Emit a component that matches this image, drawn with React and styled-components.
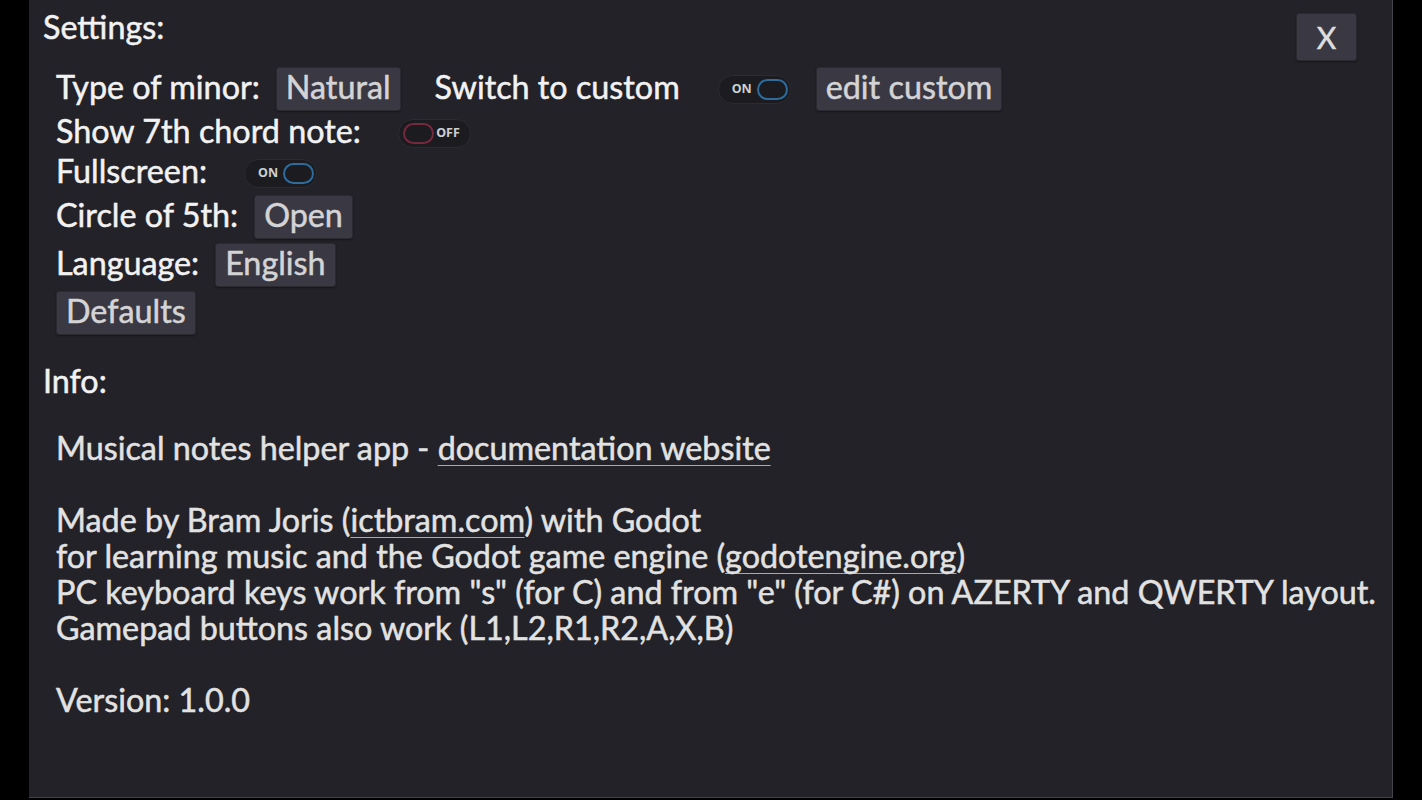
import React from 'react';
import styled, { createGlobalStyle } from 'styled-components';

const GlobalStyle = createGlobalStyle`
  html, body {
    margin: 0;
    padding: 0;
    background: #000000;
    overflow: hidden;
  }
  body {
    font-family: Lato, "Noto Sans", sans-serif;
  }
`;

const Screen = styled.div`
  width: 1422px;
  height: 800px;
  display: flex;
  background: #000000;
`;

const Panel = styled.div`
  margin-left: 29px;
  width: 1364px;
  height: 798px;
  background: #232228;
  border-right: 1px solid #44434b;
  border-bottom: 1px solid #44434b;
  padding: 9px 35px 0 14px;
  box-sizing: border-box;
  display: flex;
  flex-direction: column;
  color: #f0f0f0;
  font-size: 32.3px;
  line-height: 36px;
  -webkit-text-stroke: 0.5px currentColor;
`;

const Header = styled.div`
  display: flex;
  justify-content: space-between;
  align-items: flex-start;
`;

const Title = styled.div`
  color: #f2f2f2;
  margin-top: ${(p) => p.$top || 0}px;
`;

const CloseButton = styled.button`
  margin-top: 4px;
  width: 61px;
  height: 48px;
  font-family: inherit;
  font-size: 30px;
  color: #dedede;
  background: #3a3943;
  border: 1px solid #2b2a31;
  border-radius: 3px;
  box-shadow: 0 1px 2px rgba(0, 0, 0, 0.4);
  padding: 0;
  -webkit-text-stroke: 0.5px currentColor;
`;

const Rows = styled.div`
  display: flex;
  flex-direction: column;
  gap: 4px;
  padding-left: 13px;
  margin-top: 6px;
`;

const Row = styled.div`
  display: flex;
  align-items: center;
  min-height: ${(p) => p.$h || 36}px;
`;

const Label = styled.span`
  color: #f2f2f2;
  margin-right: ${(p) => p.$gap || 0}px;
  white-space: nowrap;
  position: relative;
  top: -2px;
`;

const Button = styled.button`
  height: 44px;
  padding: 0 9px 4px;
  font-family: inherit;
  font-size: 32.3px;
  line-height: 36px;
  color: #d4d4d6;
  background: #3a3943;
  border: 1px solid #2b2a31;
  border-radius: 3px;
  box-shadow: 0 1px 2px rgba(0, 0, 0, 0.4);
  margin-right: ${(p) => p.$gap || 0}px;
  white-space: nowrap;
  -webkit-text-stroke: 0.5px currentColor;
`;

const Track = styled.div`
  width: 73px;
  height: 29px;
  box-sizing: border-box;
  border-radius: 15px;
  background: #1c1b20;
  border: 1px solid #2c2b31;
  display: flex;
  align-items: center;
  flex-direction: ${(p) => (p.$on ? 'row' : 'row-reverse')};
  justify-content: space-between;
  padding-left: ${(p) => (p.$on ? 13 : 4)}px;
  padding-right: ${(p) => (p.$on ? 2 : 10)}px;
  margin-right: ${(p) => p.$gap || 0}px;
  -webkit-text-stroke: 0;
`;

const ToggleText = styled.span`
  font-family: "Noto Sans", sans-serif;
  font-size: 12.5px;
  line-height: 12px;
  font-weight: 700;
  color: #cfcfcf;
`;

const Knob = styled.span`
  width: 31px;
  height: 21px;
  box-sizing: border-box;
  border-radius: 11px;
  border: 2px solid ${(p) => (p.$on ? '#2f6c9c' : '#74293e')};
`;

const Toggle = ({ on, gap }) => (
  <Track $on={on} $gap={gap}>
    <ToggleText>{on ? 'ON' : 'OFF'}</ToggleText>
    <Knob $on={on} />
  </Track>
);

const Info = styled.div`
  padding-left: 13px;
  margin-top: 31px;
  color: #e2e2e2;
`;

const Line = styled.div`
  min-height: 36px;
  white-space: nowrap;
`;

const Link = styled.span`
  text-decoration: underline;
  text-decoration-color: #a9a9ad;
  text-decoration-thickness: 1px;
  text-underline-offset: 5px;
`;

export default function App() {
  return (
    <Screen>
      <GlobalStyle />
      <Panel>
        <Header>
          <Title>Settings:</Title>
          <CloseButton>X</CloseButton>
        </Header>

        <Rows>
          <Row $h={44}>
            <Label $gap={16}>Type of minor:</Label>
            <Button $gap={34}>Natural</Button>
            <Label $gap={38}>Switch to custom</Label>
            <Toggle on gap={25} />
            <Button>edit custom</Button>
          </Row>
          <Row>
            <Label $gap={37}>Show 7th chord note:</Label>
            <Toggle on={false} />
          </Row>
          <Row>
            <Label $gap={37}>Fullscreen:</Label>
            <Toggle on />
          </Row>
          <Row $h={44}>
            <Label $gap={16}>Circle of 5th:</Label>
            <Button>Open</Button>
          </Row>
          <Row $h={44}>
            <Label $gap={16}>Language:</Label>
            <Button>English</Button>
          </Row>
          <Row $h={44}>
            <Button>Defaults</Button>
          </Row>
        </Rows>

        <Title $top={28}>Info:</Title>

        <Info>
          <Line>
            Musical notes helper app - <Link>documentation website</Link>
          </Line>
          <Line />
          <Line>
            Made by Bram Joris (<Link>ictbram.com</Link>) with Godot
          </Line>
          <Line>
            for learning music and the Godot game engine (<Link>godotengine.org</Link>)
          </Line>
          <Line>
            PC keyboard keys work from "s" (for C) and from "e" (for C#) on AZERTY and QWERTY layout.
          </Line>
          <Line>Gamepad buttons also work (L1,L2,R1,R2,A,X,B)</Line>
          <Line />
          <Line>Version: 1.0.0</Line>
        </Info>
      </Panel>
    </Screen>
  );
}
